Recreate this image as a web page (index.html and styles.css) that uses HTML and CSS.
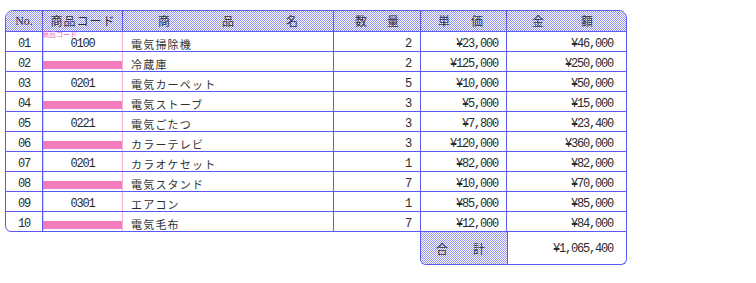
FILE: index.html
```html
<!DOCTYPE html>
<html lang="ja">
<head>
<meta charset="utf-8">
<title>商品一覧</title>
<link rel="stylesheet" href="styles.css">
</head>
<body>
<div class="sheet">
  <div class="table">
    <div class="row head">
      <div class="c no"><span class="num">No.</span></div>
      <div class="c code"><span class="jh">商品コード</span></div>
      <div class="c name spread"><span>商</span><span>品</span><span>名</span></div>
      <div class="c qty spread"><span>数</span><span>量</span></div>
      <div class="c unit spread"><span>単</span><span>価</span></div>
      <div class="c amt spread"><span>金</span><span>額</span></div>
    </div>
    <div class="row">
      <div class="c no">01</div>
      <div class="c code"><span class="tag">商品コード</span>0100</div>
      <div class="c name">電気掃除機</div>
      <div class="c qty">2</div>
      <div class="c unit">¥23,000</div>
      <div class="c amt">¥46,000</div>
    </div>
    <div class="row">
      <div class="c no">02</div>
      <div class="c code"><span class="bar"></span></div>
      <div class="c name">冷蔵庫</div>
      <div class="c qty">2</div>
      <div class="c unit">¥125,000</div>
      <div class="c amt">¥250,000</div>
    </div>
    <div class="row">
      <div class="c no">03</div>
      <div class="c code">0201</div>
      <div class="c name">電気カーペット</div>
      <div class="c qty">5</div>
      <div class="c unit">¥10,000</div>
      <div class="c amt">¥50,000</div>
    </div>
    <div class="row">
      <div class="c no">04</div>
      <div class="c code"><span class="bar"></span></div>
      <div class="c name">電気ストーブ</div>
      <div class="c qty">3</div>
      <div class="c unit">¥5,000</div>
      <div class="c amt">¥15,000</div>
    </div>
    <div class="row">
      <div class="c no">05</div>
      <div class="c code">0221</div>
      <div class="c name">電気ごたつ</div>
      <div class="c qty">3</div>
      <div class="c unit">¥7,800</div>
      <div class="c amt">¥23,400</div>
    </div>
    <div class="row">
      <div class="c no">06</div>
      <div class="c code"><span class="bar"></span></div>
      <div class="c name">カラーテレビ</div>
      <div class="c qty">3</div>
      <div class="c unit">¥120,000</div>
      <div class="c amt">¥360,000</div>
    </div>
    <div class="row">
      <div class="c no">07</div>
      <div class="c code">0201</div>
      <div class="c name">カラオケセット</div>
      <div class="c qty">1</div>
      <div class="c unit">¥82,000</div>
      <div class="c amt">¥82,000</div>
    </div>
    <div class="row">
      <div class="c no">08</div>
      <div class="c code"><span class="bar"></span></div>
      <div class="c name">電気スタンド</div>
      <div class="c qty">7</div>
      <div class="c unit">¥10,000</div>
      <div class="c amt">¥70,000</div>
    </div>
    <div class="row">
      <div class="c no">09</div>
      <div class="c code">0301</div>
      <div class="c name">エアコン</div>
      <div class="c qty">1</div>
      <div class="c unit">¥85,000</div>
      <div class="c amt">¥85,000</div>
    </div>
    <div class="row last">
      <div class="c no">10</div>
      <div class="c code"><span class="bar"></span></div>
      <div class="c name">電気毛布</div>
      <div class="c qty">7</div>
      <div class="c unit">¥12,000</div>
      <div class="c amt">¥84,000</div>
    </div>
  </div>
  <div class="total">
    <div class="t-label spread"><span>合</span><span>計</span></div>
    <div class="t-value">¥1,065,400</div>
  </div>
</div>
</body>
</html>
```

FILE: styles.css
```css
html, body {
  margin: 0;
  padding: 0;
  background: #ffffff;
}

body {
  font-family: "Liberation Mono", "Noto Sans CJK JP", monospace;
  font-size: 12px;
  letter-spacing: -1.2px;
  color: #2a2a2a;
}

.sheet {
  padding: 10px 0 0 5px;
  width: 622px;
}

.table {
  border: 1px solid #5a5af0;
  border-radius: 8px 8px 0 6px;
  overflow: hidden;
  width: 622px;
  box-sizing: border-box;
}

.row {
  display: grid;
  grid-template-columns: 37px 80px 211px 87px 86px 119px;
  height: 20px;
  border-bottom: 1px solid #5a5af0;
  box-sizing: border-box;
}

.row.last {
  border-bottom: none;
  height: 19px;
}

.row.head {
  height: 21px;
  background: repeating-conic-gradient(#9090f0 0 25%, #ffffff 0 50%) 0 0 / 2px 2px;
}

.c {
  display: flex;
  align-items: flex-end;
  line-height: 14px;
  border-right: 1px solid #5a5af0;
  box-sizing: border-box;
  position: relative;
  white-space: nowrap;
}

.c.amt {
  border-right: none;
}

.head .c {
  align-items: center;
  font-family: "Noto Sans CJK JP", sans-serif;
  font-size: 12px;
  letter-spacing: 0;
  color: #303040;
}

.head .num {
  font-family: "Liberation Serif", serif;
  font-size: 12px;
}

.no {
  justify-content: center;
}

.code {
  justify-content: center;
  border-right-color: #f4b4d8;
  box-shadow: inset 1px 0 0 #f7c4e0;
}

.head .code {
  border-right-color: #5a5af0;
  box-shadow: none;
}

.jh {
  letter-spacing: 1px;
  margin-left: 1px;
}

.name {
  font-family: "Noto Sans CJK JP", sans-serif;
  font-size: 11px;
  letter-spacing: 1.2px;
  padding-left: 8px;
  color: #303030;
}

.qty, .unit, .amt {
  justify-content: flex-end;
}

.qty { padding-right: 9px; }
.unit { padding-right: 8px; }
.amt { padding-right: 13px; }

.spread {
  justify-content: space-between !important;
}

.head .name { padding: 0 35px; letter-spacing: 0; font-size: 12px; }
.head .qty { padding: 0 21px; }
.head .unit { padding: 0 23px 0 17px; }
.head .amt { padding: 0 33px 0 25px; }

.bar {
  display: block;
  width: 100%;
  height: 8px;
  margin-bottom: 2px;
  background: #f27cbc;
}

.tag {
  position: absolute;
  left: -1px;
  top: -2px;
  font-family: "Noto Sans CJK JP", sans-serif;
  font-size: 7px;
  line-height: 8px;
  letter-spacing: 0;
  color: #f06cb8;
}

.total {
  margin-left: 415px;
  width: 207px;
  height: 33px;
  display: grid;
  grid-template-columns: 87px 1fr;
  border: 1px solid #5a5af0;
  border-top: none;
  border-radius: 0 0 6px 6px;
  overflow: hidden;
  box-sizing: border-box;
}

.t-label {
  display: flex;
  align-items: center;
  padding: 0 22px 0 15px;
  border-right: 1px solid #5a5af0;
  background: repeating-conic-gradient(#9090f0 0 25%, #ffffff 0 50%) 0 0 / 2px 2px;
  font-family: "Noto Sans CJK JP", sans-serif;
  font-size: 12px;
  letter-spacing: 0;
  color: #303040;
}

.t-value {
  display: flex;
  align-items: center;
  justify-content: flex-end;
  padding: 2px 13px 0 0;
}
```
